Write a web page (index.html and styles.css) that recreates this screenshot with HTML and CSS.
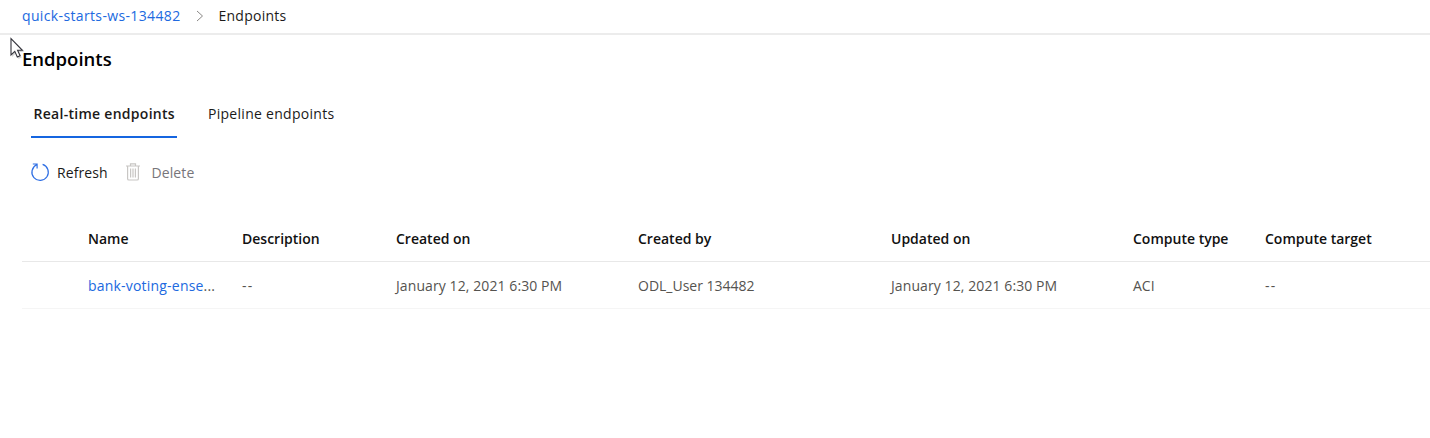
FILE: index.html
```html
<!DOCTYPE html>
<html lang="en">
<head>
<meta charset="utf-8">
<title>Endpoints</title>
<link rel="stylesheet" href="styles.css">
</head>
<body>
<nav class="breadcrumb">
  <a class="crumb-link" href="#">quick-starts-ws-134482</a>
  <svg class="chevron" width="8" height="12" viewBox="0 0 8 12"><path d="M1 1l5.5 5L1 11" fill="none" stroke="#8a8886"/></svg>
  <span class="crumb-current">Endpoints</span>
</nav>
<main class="page">
  <h1 class="title">Endpoints</h1>
  <div class="tabs">
    <div class="tab tab-active">Real-time endpoints</div>
    <div class="tab">Pipeline endpoints</div>
  </div>
  <div class="toolbar">
    <svg class="refresh-icon" width="20" height="20" viewBox="0 0 20 20" fill="none" stroke="#2f6fe4" stroke-width="1.2"><path d="M12.6 2.4A8.2 8.2 0 1 1 6.6 2.8M2.8 2h4.3v4.5"/></svg>
    <span class="refresh">Refresh</span>
    <svg class="trash-icon" width="14" height="18" viewBox="0 0 14 18" fill="none" stroke="#c8c6c4" stroke-width="1.2"><path d="M0 3h14M4.5 3v-2.2h5v2.2M1.6 3v12.7q0 1.3 1.3 1.3h8.2q1.3 0 1.3-1.3V3M4.6 5.5v9M7 5.5v9M9.4 5.5v9"/></svg>
    <span class="delete">Delete</span>
  </div>
  <div class="grid">
    <div class="row head">
      <span></span><span>Name</span><span>Description</span><span>Created on</span><span>Created by</span><span>Updated on</span><span>Compute type</span><span>Compute target</span>
    </div>
    <div class="row body-row">
      <span></span><span class="name"><a href="#">bank-voting-ense</a>...</span><span class="dash">--</span><span class="date">January 12, 2021 6:30 PM</span><span>ODL_User 134482</span><span class="date">January 12, 2021 6:30 PM</span><span>ACI</span><span class="dash">--</span>
    </div>
  </div>
</main>
<svg class="cursor" width="18" height="26" viewBox="0 0 18 26"><path d="M2 3v17l4-3.7 2.5 5.7 3.2-1.4-2.5-5.6h5z" fill="#999" opacity=".4"/><path d="M1 1.5v16.5l3.8-3.6 2.5 5.6 2.8-1.2-2.5-5.5h4.8z" fill="#fff" stroke="#34343c" stroke-width="1.1"/></svg>
</body>
</html>
```
FILE: styles.css
```css
body {
  margin: 0;
  height: 438px;
  overflow: hidden;
  position: relative;
  background: #fff;
  color: #1b1a19;
  font: 14px/20px "Open Sans", "Noto Sans", sans-serif;
  white-space: nowrap;
}
a { color: #2069e0; text-decoration: none; }
.breadcrumb {
  box-sizing: border-box;
  height: 35px;
  padding: 6px 0 0 22px;
  display: flex;
  border-bottom: 2px solid #ececec;
}
.crumb-link { width: 174px; letter-spacing: 0.36px; }
.crumb-current { letter-spacing: 0.25px; }
.chevron { margin: 4px 14.5px 0 0; }
.page { padding-left: 22px; }
.title { margin: 10px 0 0; font-size: 18.5px; line-height: 28px; font-weight: 600; color: #000; }
.tabs { display: flex; margin: 19px 0 0 9px; }
.tab { box-sizing: border-box; height: 46px; padding: 12px 2.5px 0; letter-spacing: 0.28px; }
.tab-active { width: 146px; margin-right: 28.5px; border-bottom: 2px solid #1565e0; font-weight: 600; }
.toolbar { display: flex; margin-top: 24px; height: 20px; line-height: 21px; }
.refresh-icon { margin-left: 7.5px; width: 20px; }
.refresh { width: 69px; margin-left: 7.5px; letter-spacing: 0.08px; }
.trash-icon { margin: 1px 11.5px 0 0; }
.delete { color: #77757a; letter-spacing: 0.1px; }
.grid { margin-top: 33px; }
.row {
  display: grid;
  grid-template-columns: 66px 154px 154px 242px 253px 242px 132px 165px;
  line-height: 48px;
  box-sizing: border-box;
  height: 47px;
}
.head { font-weight: 600; color: #111; border-bottom: 1px solid #e8e8e8; }
.body-row { color: #55534f; border-bottom: 1px solid #f5f5f5; }
.name { letter-spacing: 0.2px; }
.date { letter-spacing: 0.09px; }
.dash { letter-spacing: 1.2px; }
.cursor { position: absolute; left: 10px; top: 37px; }
```
